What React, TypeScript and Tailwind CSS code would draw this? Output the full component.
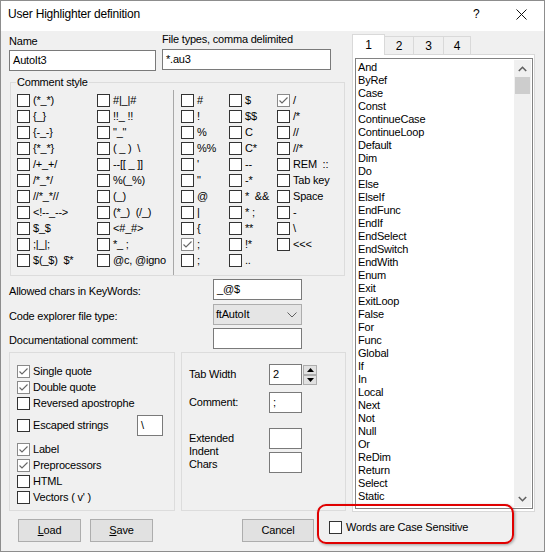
import React from 'react';

function Check({ checked = false }: { checked?: boolean }) {
  return (
    <span
      className={
        checked
          ? 'w-[13px] h-[13px] shrink-0 border border-[#8a8a8a] bg-white flex items-center justify-center'
          : 'w-[13px] h-[13px] shrink-0 border border-[#333333] bg-white flex items-center justify-center'
      }
    >
      {checked && (
        <svg width="11" height="11" viewBox="0 0 11 11">
          <path d="M1.5 5.5 L4 8 L9.5 2.5" stroke="#666666" strokeWidth="1.1" fill="none" />
        </svg>
      )}
    </span>
  );
}

function Cb({ label, checked = false }: { label: string; checked?: boolean }) {
  return (
    <div className="flex items-start h-[16px]">
      <Check checked={checked} />
      <span className="ml-[3px] leading-[13px] whitespace-pre">{label}</span>
    </div>
  );
}

type Item = [string, boolean];
const col1: Item[] = [
  ['(*_*)', false], ['{_}', false], ['{-_-}', false], ['{*_*}', false], ['/+_+/', false], ['/*_*/', false],
  ['//*_*//', false], ['<!--_-->', false], ['$_$', false], [';|_|;', false], ['$(_$)  $*', false],
];
const col2: Item[] = [
  ['#|_|#', false], ['!!_ !!', false], ['"_"', false], ['( _ )  \\', false], ['--[[ _ ]]', false], ['%(_%)', false],
  ['(_)', false], ['(*_)  (/_)', false], ['<#_#>', false], ['*_ ;', false], ['@c, @igno', false],
];
const col3: Item[] = [
  ['#', false], ['!', false], ['%', false], ['%%', false], ["'", false], ['"', false], ['@', false], ['|', false],
  ['{', false], [';', true], [';', false],
];
const col4: Item[] = [
  ['$', false], ['$$', false], ['C', false], ['C*', false], ['--', false], ['-*', false], ['*  &&', false],
  ['* ;', false], ['**', false], ['!*', false], ['..', false],
];
const col5: Item[] = [
  ['/', true], ['/*', false], ['//', false], ['//*', false], ['REM  ::', false], ['Tab key', false], ['Space', false],
  ['-', false], ['\\', false], ['<<<', false],
];

const words = [
  'And', 'ByRef', 'Case', 'Const', 'ContinueCase', 'ContinueLoop', 'Default', 'Dim', 'Do', 'Else', 'ElseIf',
  'EndFunc', 'EndIf', 'EndSelect', 'EndSwitch', 'EndWith', 'Enum', 'Exit', 'ExitLoop', 'False', 'For', 'Func',
  'Global', 'If', 'In', 'Local', 'Next', 'Not', 'Null', 'Or', 'ReDim', 'Return', 'Select', 'Static',
];

function Col({ items, w }: { items: Item[]; w: string }) {
  return (
    <div className={w}>
      {items.map(([l, c], i) => (
        <Cb key={i} label={l} checked={c} />
      ))}
    </div>
  );
}

const inputCls = 'bg-white border border-[#7a7a7a] pl-[3px] flex items-center leading-[13px] whitespace-pre';

export default function App() {
  return (
    <div className="font-['Liberation_Sans',Arial,sans-serif] text-[11px] tracking-[-0.2px] text-black w-[545px] h-[552px] border border-[#8d8d8d] bg-[#f0f0f0] relative overflow-hidden flex flex-col">
      {/* Title bar */}
      <div className="h-[30px] bg-white flex items-start shrink-0">
        <span className="ml-[7px] mt-[6px] text-[12px] leading-[15px]">User Highlighter definition</span>
        <span className="ml-auto mt-[6px] text-[12px] leading-[15px] w-[7px]">?</span>
        <svg className="ml-[36px] mr-[17px] mt-[8px]" width="11" height="11" viewBox="0 0 11 11">
          <path d="M0.5 0.5 L10.5 10.5 M10.5 0.5 L0.5 10.5" stroke="#111" strokeWidth="1" fill="none" />
        </svg>
      </div>

      {/* Main area */}
      <div className="flex h-[481px] shrink-0">
        {/* Left column */}
        <div className="ml-[8px] w-[337px]">
          <div className="flex items-start">
            <div className="mt-[4px] w-[147px]">
              <div className="h-[13px] leading-[13px]">Name</div>
              <div className={inputCls + ' mt-[2px] h-[21px]'}>AutoIt3</div>
            </div>
            <div className="ml-[6px] mt-[2px] w-[169px]">
              <div className="h-[13px] leading-[13px]">File types, comma delimited</div>
              <div className={inputCls + ' mt-[3px] h-[21px]'}>*.au3</div>
            </div>
          </div>

          {/* Comment style group */}
          <div className="relative mt-[11px] ml-[1px] w-[335px] h-[194px] border border-[#dcdcdc] pt-[7px] flex">
            <span className="absolute -top-[7px] left-[5px] bg-[#f0f0f0] px-[1px] leading-[13px]">Comment style</span>
            <div className="pl-[6px] pt-[4px] w-[162px] flex">
              <Col items={col1} w="w-[80px]" />
              <Col items={col2} w="w-[76px]" />
            </div>
            <div className="border-l border-[#a8a8a8] pl-[7px] pt-[4px] flex">
              <Col items={col3} w="w-[48px]" />
              <Col items={col4} w="w-[48px]" />
              <Col items={col5} w="w-[60px]" />
            </div>
          </div>

          {/* Option rows */}
          <div className="mt-[3px] flex h-[21px]">
            <div className="w-[204px] mt-[6px] leading-[13px]">Allowed chars in KeyWords:</div>
            <div className={inputCls + ' w-[89px] h-[21px]'}>_@$</div>
          </div>
          <div className="mt-[4px] flex h-[21px]">
            <div className="w-[204px] mt-[6px] leading-[13px]">Code explorer file type:</div>
            <div className="w-[89px] h-[21px] bg-[#e5e5e5] border border-[#adadad] flex items-center pl-[2px] leading-[13px]">
              ftAutoIt
              <svg className="ml-auto mr-[4px]" width="10" height="6" viewBox="0 0 10 6">
                <path d="M0.5 0.5 L5 5 L9.5 0.5" stroke="#606060" strokeWidth="1" fill="none" />
              </svg>
            </div>
          </div>
          <div className="mt-[3px] flex h-[21px]">
            <div className="w-[204px] mt-[6px] leading-[13px]">Documentational comment:</div>
            <div className={inputCls + ' w-[89px] h-[21px]'}></div>
          </div>

          {/* Bottom groups */}
          <div className="mt-[3px] flex">
            <div className="w-[166px] h-[159px] border border-[#dcdcdc] pt-[12px] pl-[7px] pr-[11px]">
              <Cb label="Single quote" checked />
              <Cb label="Double quote" checked />
              <Cb label="Reversed apostrophe" />
              <div className="mt-[2px] h-[21px] flex items-center">
                <Check />
                <span className="ml-[3px] leading-[13px]">Escaped strings</span>
                <div className={inputCls + ' ml-auto w-[26px] h-[21px]'}>\</div>
              </div>
              <div className="mt-[7px]">
                <Cb label="Label" checked />
                <Cb label="Preprocessors" checked />
                <Cb label="HTML" />
                <Cb label="Vectors ( v' )" />
              </div>
            </div>
            <div className="ml-[6px] w-[165px] h-[159px] border border-[#dcdcdc] pt-[11px] pl-[7px]">
              <div className="flex items-center h-[21px]">
                <div className="w-[80px] leading-[13px]">Tab Width</div>
                <div className={inputCls + ' w-[33px] h-[21px]'}>2</div>
                <div className="ml-[1px] self-start mt-[1px] flex flex-col">
                  <div className="w-[14px] h-[10px] bg-[#e1e1e1] border border-[#adadad] flex items-center justify-center">
                    <svg width="7" height="4" viewBox="0 0 7 4">
                      <path d="M0 4 L3.5 0 L7 4 Z" fill="#000" />
                    </svg>
                  </div>
                  <div className="w-[14px] h-[10px] bg-[#e1e1e1] border border-[#adadad] flex items-center justify-center">
                    <svg width="7" height="4" viewBox="0 0 7 4">
                      <path d="M0 0 L3.5 4 L7 0 Z" fill="#000" />
                    </svg>
                  </div>
                </div>
              </div>
              <div className="mt-[7px] flex items-center h-[21px]">
                <div className="w-[80px] leading-[13px]">Comment:</div>
                <div className={inputCls + ' w-[33px] h-[21px]'}>;</div>
              </div>
              <div className="mt-[15px] flex items-start">
                <div className="w-[80px] mt-[4px] leading-[13px]">
                  <div>Extended</div>
                  <div>Indent</div>
                  <div>Chars</div>
                </div>
                <div>
                  <div className={inputCls + ' w-[33px] h-[21px]'}></div>
                  <div className={inputCls + ' mt-[3px] w-[33px] h-[21px]'}></div>
                </div>
              </div>
            </div>
          </div>
        </div>

        {/* Right column */}
        <div className="ml-[6px] w-[183px] pt-[3px]">
          <div className="h-[20px] flex items-end">
            <div className="-mb-px h-[21px] w-[33px] relative z-10 bg-white border border-b-0 border-[#d9d9d9] flex items-center justify-center text-[12px] leading-[14px]">
              1
            </div>
            <div className="-ml-px h-[18px] w-[30px] bg-[#f0f0f0] border border-b-0 border-[#d9d9d9] flex items-center justify-center text-[12px] leading-[14px]">
              2
            </div>
            <div className="-ml-px h-[18px] w-[31px] bg-[#f0f0f0] border border-b-0 border-[#d9d9d9] flex items-center justify-center text-[12px] leading-[14px]">
              3
            </div>
            <div className="-ml-px h-[18px] w-[28px] bg-[#f0f0f0] border border-b-0 border-[#d9d9d9] flex items-center justify-center text-[12px] leading-[14px]">
              4
            </div>
          </div>
          <div className="h-[458px] bg-white border border-[#d9d9d9] pt-[3px] pl-[2px] pr-[1px]">
            <div className="w-[178px] h-[451px] border border-[#828282] p-[1px] flex">
              <div className="flex-1 pt-[1px] pl-[1px] overflow-hidden">
                {words.map((w) => (
                  <div key={w} className="h-[13px] leading-[13px] whitespace-nowrap">
                    {w}
                  </div>
                ))}
              </div>
              <div className="w-[17px] bg-[#f0f0f0] flex flex-col">
                <div className="h-[17px] flex items-center justify-center">
                  <svg width="9" height="6" viewBox="0 0 9 6">
                    <path d="M0.8 5 L4.5 1.3 L8.2 5" stroke="#606060" strokeWidth="1.6" fill="none" />
                  </svg>
                </div>
                <div className="h-[17px] mx-[1px] bg-[#cdcdcd]"></div>
                <div className="flex-1"></div>
                <div className="h-[17px] flex items-center justify-center">
                  <svg width="9" height="6" viewBox="0 0 9 6">
                    <path d="M0.8 1 L4.5 4.7 L8.2 1" stroke="#606060" strokeWidth="1.6" fill="none" />
                  </svg>
                </div>
              </div>
            </div>
          </div>
        </div>
      </div>

      {/* Bottom buttons */}
      <div className="flex items-start mt-[7px]">
        <div className="ml-[17px] w-[63px] h-[23px] bg-[#e1e1e1] border border-[#adadad] flex items-center justify-center leading-[13px]">
          <span className="underline">L</span>oad
        </div>
        <div className="ml-[9px] w-[63px] h-[23px] bg-[#e1e1e1] border border-[#adadad] flex items-center justify-center leading-[13px]">
          <span className="underline">S</span>ave
        </div>
        <div className="ml-[89px] w-[72px] h-[23px] bg-[#e1e1e1] border border-[#adadad] flex items-center justify-center leading-[13px]">
          Cancel
        </div>
        <div className="ml-[15px] mt-[2px] flex items-center">
          <Check />
          <span className="ml-[4px] leading-[13px]">Words are Case Sensitive</span>
        </div>
      </div>

      {/* Annotation */}
      <div className="absolute left-[316px] top-[503px] w-[197px] h-[40px] border-2 border-[#e00000] rounded-[9px] shadow-[1px_1px_3px_rgba(0,0,0,0.35)] pointer-events-none"></div>
    </div>
  );
}
